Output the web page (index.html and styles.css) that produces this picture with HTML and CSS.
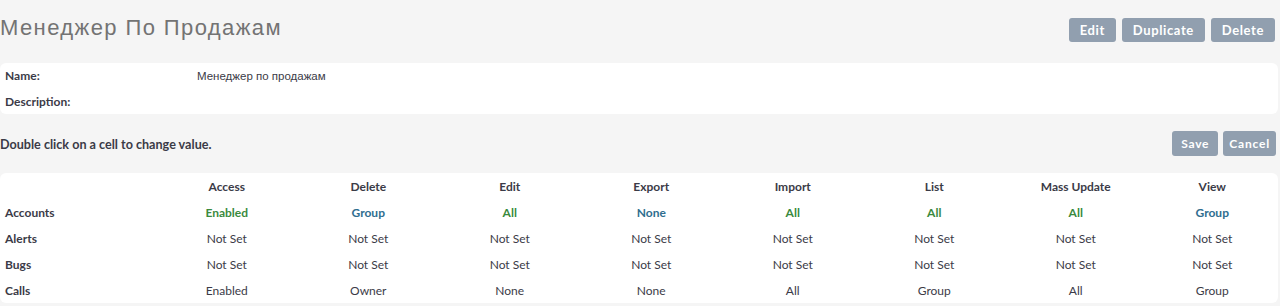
FILE: index.html
```html
<!DOCTYPE html>
<html>
<head>
<meta charset="utf-8">
<link rel="stylesheet" href="styles.css">
</head>
<body>
<div class="page">
  <div class="top">
    <h1 class="title">Менеджер По Продажам</h1>
    <div class="btns">
      <button class="btn btn-lg">Edit</button>
      <button class="btn btn-lg">Duplicate</button>
      <button class="btn btn-lg">Delete</button>
    </div>
  </div>
  <div class="panel detail">
    <div class="drow"><span class="dlabel">Name:</span><span class="dval">Менеджер по продажам</span></div>
    <div class="drow"><span class="dlabel">Description:</span><span class="dval"></span></div>
  </div>
  <div class="hintbar">
    <span class="hint">Double click on a cell to change value.</span>
    <div class="btns">
      <button class="btn">Save</button>
      <button class="btn btn-tight">Cancel</button>
    </div>
  </div>
  <div class="panel matrix">
    <div class="grid">
      <div class="cell head"></div>
      <div class="cell head c">Access</div>
      <div class="cell head c">Delete</div>
      <div class="cell head c">Edit</div>
      <div class="cell head c">Export</div>
      <div class="cell head c">Import</div>
      <div class="cell head c">List</div>
      <div class="cell head c">Mass Update</div>
      <div class="cell head c">View</div>

      <div class="cell rlabel">Accounts</div>
      <div class="cell c green">Enabled</div>
      <div class="cell c blue">Group</div>
      <div class="cell c green">All</div>
      <div class="cell c blue">None</div>
      <div class="cell c green">All</div>
      <div class="cell c green">All</div>
      <div class="cell c green">All</div>
      <div class="cell c blue">Group</div>

      <div class="cell rlabel">Alerts</div>
      <div class="cell c">Not Set</div>
      <div class="cell c">Not Set</div>
      <div class="cell c">Not Set</div>
      <div class="cell c">Not Set</div>
      <div class="cell c">Not Set</div>
      <div class="cell c">Not Set</div>
      <div class="cell c">Not Set</div>
      <div class="cell c">Not Set</div>

      <div class="cell rlabel">Bugs</div>
      <div class="cell c">Not Set</div>
      <div class="cell c">Not Set</div>
      <div class="cell c">Not Set</div>
      <div class="cell c">Not Set</div>
      <div class="cell c">Not Set</div>
      <div class="cell c">Not Set</div>
      <div class="cell c">Not Set</div>
      <div class="cell c">Not Set</div>

      <div class="cell rlabel">Calls</div>
      <div class="cell c">Enabled</div>
      <div class="cell c">Owner</div>
      <div class="cell c">None</div>
      <div class="cell c">None</div>
      <div class="cell c">All</div>
      <div class="cell c">Group</div>
      <div class="cell c">All</div>
      <div class="cell c">Group</div>
    </div>
  </div>
</div>
</body>
</html>
```
FILE: styles.css
```css
html, body {
  margin: 0;
  padding: 0;
  background: #f5f5f5;
}
body {
  font-family: Lato, "Liberation Sans", sans-serif;
  color: #3b3b47;
  font-size: 12px;
}
.page {
  width: 1278px;
}
.top {
  display: flex;
  justify-content: space-between;
  align-items: flex-start;
  height: 63px;
}
.title {
  margin: 14px 0 0 0;
  font-family: "Liberation Sans", Arial, sans-serif;
  font-weight: normal;
  font-size: 22px;
  letter-spacing: 1.4px;
  color: #737373;
  line-height: 28px;
}
.btns {
  display: flex;
  gap: 6px;
}
.top .btns {
  margin-top: 18px;
  margin-right: 3px;
}
.btn {
  font-family: Lato, "Liberation Sans", sans-serif;
  font-weight: bold;
  font-size: 12px;
  letter-spacing: 0.8px;
  color: #ffffff;
  background: #919faf;
  border: none;
  border-radius: 3px;
  height: 25px;
  padding: 0 9px;
  cursor: pointer;
}
.btn-lg {
  font-size: 13px;
  letter-spacing: 0.6px;
  padding: 0 11px;
  height: 24px;
}
.btn-tight {
  padding: 0 6px;
}
.panel {
  background: #ffffff;
  border-radius: 6px;
}
.detail {
  height: 51px;
  padding: 0 0 0 5px;
  display: flex;
  flex-direction: column;
  justify-content: center;
}
.drow {
  display: flex;
  height: 26px;
  align-items: center;
}
.dlabel {
  width: 192px;
  font-weight: bold;
  font-size: 12px;
}
.dval {
  font-size: 11.5px;
  font-family: "Liberation Sans", Arial, sans-serif;
}
.hintbar {
  display: flex;
  justify-content: space-between;
  align-items: center;
  height: 59px;
}
.hint {
  font-weight: bold;
  font-size: 12.6px;
  margin-top: 1px;
}
.hintbar .btns {
  margin-right: 2px;
  gap: 5px;
  margin-top: -1px;
}
.grid {
  display: grid;
  grid-template-columns: 156px repeat(7, 141.5px) 1fr;
  grid-auto-rows: 26px;
}
.cell {
  display: flex;
  align-items: center;
  font-size: 12px;
  white-space: nowrap;
}
.c {
  justify-content: center;
}
.head {
  font-weight: bold;
}
.rlabel {
  font-weight: bold;
  padding-left: 5px;
}
.green {
  color: #3a8a3e;
  font-weight: bold;
}
.blue {
  color: #2f6e8f;
  font-weight: bold;
}
```
